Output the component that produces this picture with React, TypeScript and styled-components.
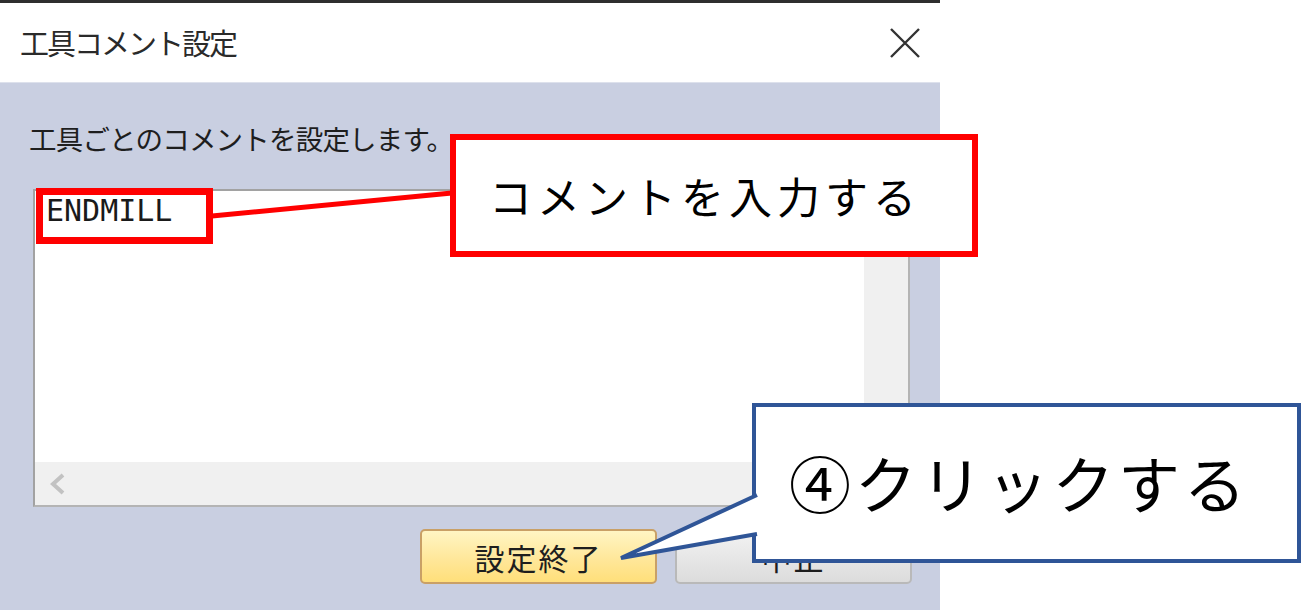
import React from "react";
import styled, { createGlobalStyle } from "styled-components";

const GlobalStyle = createGlobalStyle`
  html, body { margin: 0; padding: 0; background: #ffffff; }
  * { box-sizing: border-box; }
`;

const JP = `"Noto Sans CJK JP", "Noto Sans", sans-serif`;

const Page = styled.div`
  position: relative;
  width: 1303px;
  height: 610px;
  overflow: hidden;
  background: #ffffff;
  font-family: ${JP};
`;

const Dialog = styled.div`
  width: 940px;
  height: 610px;
  display: flex;
  flex-direction: column;
  border-top: 3px solid #2e2e2e;
`;

const TitleBar = styled.div`
  height: 80px;
  flex: none;
  background: #ffffff;
  display: flex;
  align-items: center;
  justify-content: space-between;
  padding: 0 19px 0 20px;
  border-bottom: 1px solid #dde1ec;
`;

const Title = styled.span`
  font-size: 29px;
  letter-spacing: -2px;
  color: #2a2a2a;
  line-height: 1;
`;

const Body = styled.div`
  flex: 1;
  background: #c9cfe1;
  display: flex;
  flex-direction: column;
  padding: 38px 28px 0 29px;
`;

const Label = styled.div`
  font-size: 27.5px;
  letter-spacing: -0.8px;
  line-height: 34px;
  height: 34px;
  color: #1e1e1e;
`;

const ListBox = styled.div`
  margin: 34px 0 0 4px;
  width: 877px;
  height: 318px;
  border-top: 2px solid #a2a2a2;
  border-left: 2px solid #a2a2a2;
  border-right: 2px solid #b4b4b4;
  border-bottom: 2px solid #b4b4b4;
  display: grid;
  grid-template-columns: 1fr 44px;
  grid-template-rows: 1fr 43px;
  background: #ffffff;
`;

const ListContent = styled.div`
  background: #ffffff;
  padding: 5px 0 0 11px;
  font-family: "DejaVu Sans Mono", "Liberation Mono", monospace;
  font-size: 30px;
  line-height: 30px;
  color: #1a1a1a;
`;

const VScroll = styled.div`
  background: #f0f0f0;
`;

const HScroll = styled.div`
  grid-column: 1 / 3;
  background: #f0f0f0;
  display: flex;
  align-items: center;
  padding-left: 12px;
`;

const ButtonRow = styled.div`
  display: flex;
  justify-content: flex-end;
  gap: 18px;
  margin-top: 22px;
`;

const Button = styled.div<{ $primary?: boolean }>`
  width: 237px;
  height: 55px;
  border-radius: 5px;
  display: flex;
  align-items: center;
  justify-content: center;
  font-size: 30px;
  letter-spacing: 2px;
  color: #1e1e1e;
  border: 2px solid ${(p) => (p.$primary ? "#c9a066" : "#b9b9b9")};
  background: ${(p) =>
    p.$primary
      ? "linear-gradient(#fff5c4, #ffe79a 55%, #ffdf7a)"
      : "linear-gradient(#f3f3f3, #e6e6e6 55%, #dcdcdc)"};
`;

const HighlightBox = styled.div`
  position: absolute;
  left: 36px;
  top: 188px;
  width: 177px;
  height: 56px;
  border: 7px solid #ff0000;
`;

const Callout = styled.div<{ $color: string; $bw: number }>`
  position: absolute;
  background: #ffffff;
  border: ${(p) => p.$bw}px solid ${(p) => p.$color};
  display: flex;
  align-items: center;
  color: #000000;
  font-family: ${JP};
  line-height: 1;
`;

const RedCallout = styled(Callout)`
  left: 450px;
  top: 134px;
  width: 528px;
  height: 123px;
  padding-left: 33px;
  font-size: 43px;
  letter-spacing: 5px;
`;

const BlueCallout = styled(Callout)`
  left: 752px;
  top: 403px;
  width: 549px;
  height: 160px;
  padding-left: 33px;
  padding-bottom: 2px;
  font-size: 62px;
  letter-spacing: 3.8px;
`;

const Overlay = styled.svg`
  position: absolute;
  left: 0;
  top: 0;
  width: 1303px;
  height: 610px;
  pointer-events: none;
`;

export default function App() {
  return (
    <>
      <GlobalStyle />
      <Page>
        <Dialog>
          <TitleBar>
            <Title>工具コメント設定</Title>
            <svg width="32" height="30" viewBox="0 0 32 30">
              <path d="M2 1 L30 29 M30 1 L2 29" stroke="#333" strokeWidth="2.4" fill="none" />
            </svg>
          </TitleBar>
          <Body>
            <Label>工具ごとのコメントを設定します。</Label>
            <ListBox>
              <ListContent>ENDMILL</ListContent>
              <VScroll />
              <HScroll>
                <svg width="22" height="24" viewBox="0 0 22 24">
                  <path d="M16 3 L6 12 L16 21" stroke="#c2c2c2" strokeWidth="4" fill="none" />
                </svg>
              </HScroll>
            </ListBox>
            <ButtonRow>
              <Button $primary>設定終了</Button>
              <Button>中止</Button>
            </ButtonRow>
          </Body>
        </Dialog>

        <Overlay viewBox="0 0 1303 610">
          <line x1="212" y1="216" x2="452" y2="193" stroke="#ff0000" strokeWidth="5" />
        </Overlay>
        <HighlightBox />
        <RedCallout $color="#ff0000" $bw={6}>コメントを入力する</RedCallout>
        <BlueCallout $color="#2f5597" $bw={4}>④クリックする</BlueCallout>
        <Overlay viewBox="0 0 1303 610">
          <path d="M757 495 L621 558 L757 534" fill="#ffffff" stroke="#2f5597" strokeWidth="4" strokeLinejoin="miter" />
        </Overlay>
      </Page>
    </>
  );
}
